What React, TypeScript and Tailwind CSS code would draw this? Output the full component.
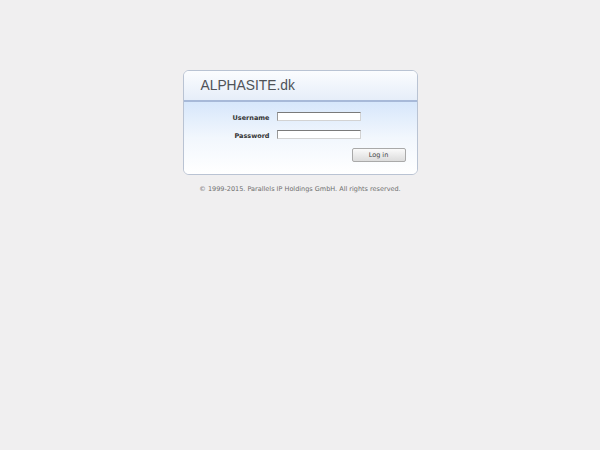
export default function App() {
  return (
    <div className="w-[600px] h-[450px] bg-[#f0eff0] flex flex-col items-center pt-[70px] font-['DejaVu_Sans',sans-serif]">
      <div className="w-[235px] h-[105px] rounded-[6px] border border-[#b9c3d3] bg-white overflow-hidden flex flex-col">
        <div className="h-[29px] shrink-0 bg-gradient-to-b from-[#fbfcfe] to-[#e6eef9] flex items-center pl-[17px]">
          <span className="font-['Liberation_Sans',sans-serif] text-[13.8px] text-[#4f5358] leading-none">ALPHASITE.dk</span>
        </div>
        <div className="h-[2px] shrink-0 bg-[#a7b9d8]" />
        <div className="flex-1 bg-gradient-to-b from-[#d7e7fb] via-[#f2f7fd] to-white flex flex-col pt-[10px]">
          <div className="flex items-start h-[10px]">
            <span className="w-[93px] text-right pr-[7px] pt-[3px] text-[6.5px] leading-none font-bold text-[#333]">Username</span>
            <div className="w-[84px] h-[9px] bg-white border border-[#d3d3d3] border-t-[#7a7a7a] border-l-[#9a9a9a]" />
          </div>
          <div className="flex items-start h-[10px] mt-[8px]">
            <span className="w-[93px] text-right pr-[7px] pt-[3px] text-[6.5px] leading-none font-bold text-[#333]">Password</span>
            <div className="w-[84px] h-[9px] bg-white border border-[#d3d3d3] border-t-[#7a7a7a] border-l-[#9a9a9a]" />
          </div>
          <div className="flex justify-end pr-[11px] mt-[8px]">
            <button className="w-[54px] h-[14px] rounded-[2px] border border-[#a9a9a9] bg-gradient-to-b from-[#fafafa] to-[#dcdcdc] text-[6.5px] text-[#444] leading-none">
              Log in
            </button>
          </div>
        </div>
      </div>
      <p className="mt-[11px] text-[6.5px] text-[#6e6e6e] leading-none">© 1999-2015. Parallels IP Holdings GmbH. All rights reserved.</p>
    </div>
  );
}
